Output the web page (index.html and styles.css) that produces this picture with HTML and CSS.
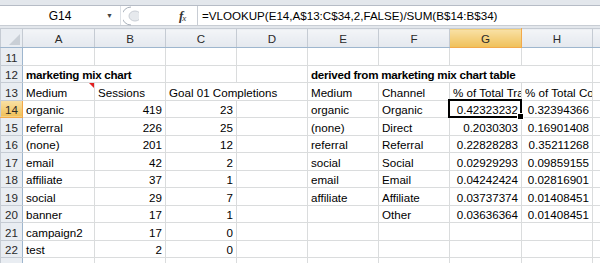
FILE: index.html
```html
<!DOCTYPE html>
<html lang="en">
<head>
  <meta charset="UTF-8" />
  <title>marketing mix chart</title>
  <link rel="stylesheet" href="styles.css">
</head>
<body>

  <!-- ribbon edge -->
  <div class="ribbon"></div>

  <!-- name box + formula bar -->
  <div class="fbar">
    <div class="namebox">
      <span class="name">G14</span>
      <span class="drop">&#9660;</span>
    </div>
    <div class="grip">
      <svg width="16" height="20" viewBox="0 0 16 20">
        <path d="M8 1 A9 9 0 0 0 8 19" fill="none" stroke="#a8b0ba" stroke-width="1"/>
        <ellipse cx="12" cy="10" rx="6" ry="5" fill="#e6e9ed" stroke="#c9ced5"/>
      </svg>
    </div>
    <div class="fx"><i>f</i><small>x</small></div>
    <div class="formula">=VLOOKUP(E14,A$13:C$34,2,FALSE)/SUM(B$14:B$34)</div>
  </div>

  <table class="sheet">
    <colgroup>
      <col class="c-rh"><col class="c-a"><col><col><col><col><col><col class="c-a"><col><col class="c-i">
    </colgroup>
    <thead>
      <tr>
        <th class="corner"></th>
        <th>A</th><th>B</th><th>C</th><th>D</th><th>E</th><th>F</th><th class="sel">G</th><th>H</th><th></th>
      </tr>
    </thead>
    <tbody>
      <tr><th>11</th><td></td><td></td><td></td><td></td><td></td><td></td><td></td><td></td><td></td></tr>
      <tr>
        <th>12</th>
        <td colspan="2" class="b">marketing mix chart</td><td></td><td></td>
        <td colspan="4" class="b">derived from marketing mix chart table</td><td></td>
      </tr>
      <tr>
        <th>13</th>
        <td class="note">Medium</td><td>Sessions</td><td colspan="2">Goal 01 Completions</td>
        <td>Medium</td><td>Channel</td><td class="clip">% of Total Traffic</td><td class="clip">% of Total Completions</td><td></td>
      </tr>
      <tr>
        <th class="sel">14</th>
        <td>organic</td><td class="n">419</td><td class="n">23</td><td></td>
        <td>organic</td><td>Organic</td><td class="n active">0.42323232</td><td class="n">0.32394366</td><td></td>
      </tr>
      <tr>
        <th>15</th>
        <td>referral</td><td class="n">226</td><td class="n">25</td><td></td>
        <td>(none)</td><td>Direct</td><td class="n">0.2030303</td><td class="n">0.16901408</td><td></td>
      </tr>
      <tr>
        <th>16</th>
        <td>(none)</td><td class="n">201</td><td class="n">12</td><td></td>
        <td>referral</td><td>Referral</td><td class="n">0.22828283</td><td class="n">0.35211268</td><td></td>
      </tr>
      <tr>
        <th>17</th>
        <td>email</td><td class="n">42</td><td class="n">2</td><td></td>
        <td>social</td><td>Social</td><td class="n">0.02929293</td><td class="n">0.09859155</td><td></td>
      </tr>
      <tr>
        <th>18</th>
        <td>affiliate</td><td class="n">37</td><td class="n">1</td><td></td>
        <td>email</td><td>Email</td><td class="n">0.04242424</td><td class="n">0.02816901</td><td></td>
      </tr>
      <tr>
        <th>19</th>
        <td>social</td><td class="n">29</td><td class="n">7</td><td></td>
        <td>affiliate</td><td>Affiliate</td><td class="n">0.03737374</td><td class="n">0.01408451</td><td></td>
      </tr>
      <tr>
        <th>20</th>
        <td>banner</td><td class="n">17</td><td class="n">1</td><td></td>
        <td></td><td>Other</td><td class="n">0.03636364</td><td class="n">0.01408451</td><td></td>
      </tr>
      <tr>
        <th>21</th>
        <td>campaign2</td><td class="n">17</td><td class="n">0</td><td></td>
        <td></td><td></td><td></td><td></td><td></td>
      </tr>
      <tr>
        <th>22</th>
        <td>test</td><td class="n">2</td><td class="n">0</td><td></td>
        <td></td><td></td><td></td><td></td><td></td>
      </tr>
      <tr><th></th><td></td><td></td><td></td><td></td><td></td><td></td><td></td><td></td><td></td></tr>
    </tbody>
  </table>

</body>
</html>
```

FILE: styles.css
```css
* { box-sizing: border-box; }

html, body {
  margin: 0;
  padding: 0;
  width: 600px;
  height: 263px;
  overflow: hidden;
  background: #fff;
  font-family: "Liberation Sans", Arial, sans-serif;
  color: #000;
}

/* ---- top strip ---- */
.ribbon {
  height: 6px;
  background: #e3e7ec;
  border-bottom: 1px solid #b6bcc6;
}

/* ---- formula bar ---- */
.fbar {
  display: flex;
  height: 20px;
  background: #fff;
  border-bottom: 1px solid #c8cdd4;
  margin-bottom: 2px;
  box-shadow: 0 1px 0 #e3e7ec, 0 2px 0 #e3e7ec;
}

.namebox {
  width: 121px;
  display: flex;
  align-items: center;
  border-right: 1px solid #dde1e6;
  font-size: 12px;
}

.name { flex: 1; text-align: center; padding-left: 14px; }

.drop {
  font-size: 7px;
  color: #444;
  width: 14px;
}

.grip {
  width: 58px;
  display: flex;
  align-items: center;
  padding-left: 2px;
  background: #fff;
}

.fx {
  width: 18px;
  display: flex;
  align-items: center;
  font-family: "Liberation Serif", serif;
  font-size: 13px;
  color: #333;
}
.fx i { font-weight: bold; }
.fx small { font-size: 9px; font-style: italic; margin-left: -1px; margin-top: 4px; }

.formula {
  flex: 1;
  display: flex;
  align-items: center;
  border-left: 1px solid #c8cdd4;
  padding-left: 4px;
  font-size: 11.6px;
  white-space: nowrap;
}

/* ---- grid ---- */
.sheet {
  border-collapse: collapse;
  table-layout: fixed;
  width: 600px;
  font-size: 11.6px;
}

.sheet col { width: 71px; }
.sheet col.c-rh { width: 22px; }
.sheet col.c-a { width: 72px; }
.sheet col.c-i { width: 8px; }

.sheet td {
  height: 17.5px;
  padding: 0 3px 1px 3px;
  border: 1px solid #dadcdd;
  white-space: nowrap;
  vertical-align: bottom;
  overflow: visible;
}

.sheet thead th {
  height: 19px;
  font-weight: normal;
  font-size: 11.6px;
  color: #2a2a2a;
  background: linear-gradient(#f3f5f8, #e4e8ee);
  border: 1px solid #c5cbd3;
  border-bottom-color: #9eb6ce;
}

.sheet tbody th {
  font-weight: normal;
  font-size: 11.6px;
  color: #2a2a2a;
  background: #e9edf2;
  border: 1px solid #c5cbd3;
  border-right-color: #9eb6ce;
  text-align: center;
  padding: 0;
  vertical-align: bottom;
  padding-bottom: 1px;
}

.sheet th.corner {
  position: relative;
  background: #e9edf2;
}
.sheet th.corner::after {
  content: "";
  position: absolute;
  right: 2px;
  bottom: 2px;
  border-left: 11px solid transparent;
  border-bottom: 11px solid #c9cfd6;
}

.sheet thead th.sel,
.sheet tbody th.sel {
  background: linear-gradient(#f9e1a6, #f0c058);
  border-bottom-color: #f2a94b;
  border-right-color: #f2a94b;
}

.sheet .b { font-weight: bold; letter-spacing: -0.25px; }
.sheet .n { text-align: right; }
.sheet .clip { overflow: hidden; }

.sheet td.note { position: relative; }
.sheet td.note::after {
  content: "";
  position: absolute;
  top: 0;
  right: 0;
  border-left: 5px solid transparent;
  border-top: 5px solid #e22020;
}

.sheet td.active { position: relative; }
.sheet td.active::before {
  content: "";
  position: absolute;
  inset: -2px -1px -1px -2px;
  border: 2px solid #000;
}
.sheet td.active::after {
  content: "";
  position: absolute;
  right: -3px;
  bottom: -3px;
  width: 5px;
  height: 5px;
  background: #000;
  border: 1px solid #fff;
}
```
